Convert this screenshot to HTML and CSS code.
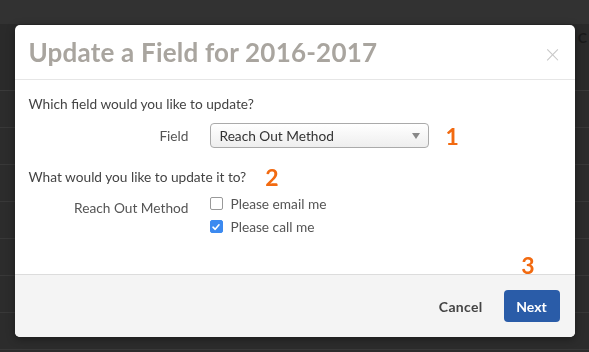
FILE: index.html
```html
<!DOCTYPE html>
<html lang="en">
<head>
  <meta charset="UTF-8">
  <title>Update a Field</title>
  <link rel="stylesheet" href="styles.css">
</head>
<body>
  <div class="page">
    <div class="topbar"></div>
    <div class="table-head"><span class="head-text">C</span></div>
    <div class="row"></div>
    <div class="row"></div>
    <div class="row"></div>
    <div class="row"></div>
    <div class="row"></div>
    <div class="row"></div>
    <div class="row"></div>
  </div>

  <!-- Modal -->
  <div class="modal-overlay">
    <div class="modal">
      <div class="modal-header">
        <h2>Update a Field for 2016-2017</h2>
        <span class="close">&times;</span>
      </div>

      <div class="modal-body">
        <p class="question">Which field would you like to update?</p>
        <div class="field-row">
          <label class="field-label">Field</label>
          <div class="field-control">
            <div class="select">
              <span>Reach Out Method</span>
              <span class="arrow"></span>
            </div>
            <span class="step">1</span>
          </div>
        </div>

        <p class="question">What would you like to update it to? <span class="step">2</span></p>
        <div class="field-row top">
          <label class="field-label">Reach Out Method</label>
          <div class="checks">
            <label class="check"><span class="box"></span>Please email me</label>
            <label class="check"><span class="box checked">
              <svg width="10" height="10" viewBox="0 0 10 10"><path d="M2 5.2 L4.2 7.3 L8 2.8" fill="none" stroke="#fff" stroke-width="1.6" stroke-linecap="round" stroke-linejoin="round"/></svg>
            </span>Please call me</label>
          </div>
        </div>
        <div class="step-row"><span class="step">3</span></div>
      </div>

      <div class="modal-footer">
        <button class="btn-cancel">Cancel</button>
        <button class="btn-next">Next</button>
      </div>
    </div>
  </div>
</body>
</html>
```

FILE: styles.css
```css
body {
  margin: 0;
  font-family: Lato, "Open Sans", sans-serif;
  background-color: #2c2c2c;
  overflow: hidden;
}

/* fondo detras del modal */
.page {
  height: 352px;
}

.topbar {
  height: 24px;
  background-color: #323232;
}

.table-head {
  height: 66px;
  background-color: #2a2a2a;
  border-bottom: 1px solid #3a3a3a;
  display: flex;
  justify-content: flex-end;
}

.head-text {
  color: #1a1a1a;
  font-weight: bold;
  font-size: 14px;
  padding: 5px 2px 0 0;
}

.row {
  height: 36px;
  border-bottom: 1px solid #383838;
}

/* modal */
.modal-overlay {
  position: fixed;
  top: 0; left: 0;
  width: 100%; height: 100%;
  display: flex;
  justify-content: center;
  align-items: flex-start;
  padding-top: 25px;
  box-sizing: border-box;
}

.modal {
  width: 560px;
  background: #fff;
  border-radius: 5px;
  overflow: hidden;
  box-shadow: 0 2px 8px rgba(0,0,0,0.4);
}

.modal-header {
  height: 54px;
  border-bottom: 1px solid #e6e6e6;
  display: flex;
  justify-content: space-between;
  align-items: center;
  padding: 0 14px 0 14px;
}

.modal-header h2 {
  margin: 0;
  font-size: 26px;
  font-weight: bold;
  color: #a9a59f;
  letter-spacing: 0.2px;
}

.close {
  color: #c8c8c8;
  font-size: 27px;
  font-weight: 300;
  margin: 2px 0 0 0;
}

.modal-body {
  padding: 14px 14px 0;
  height: 180px;
  color: #444;
  font-size: 13.7px;
}

.question {
  margin: 0;
  height: 20px;
  line-height: 20px;
  display: flex;
  align-items: center;
}

.question .step {
  margin-left: 19px;
}

.field-row {
  display: grid;
  grid-template-columns: 160px 1fr;
  column-gap: 21px;
  align-items: center;
  margin: 9px 0 19px;
}

.field-row.top {
  align-items: start;
  margin: 5px 0 0;
}

.field-label {
  text-align: right;
  color: #555;
}

.field-row.top .field-label {
  padding-top: 7px;
}

.field-control {
  display: flex;
  align-items: center;
}

.select {
  width: 219px;
  height: 25px;
  box-sizing: border-box;
  border: 1px solid #aaa;
  border-radius: 4px;
  background: linear-gradient(#fff, #eee);
  display: flex;
  justify-content: space-between;
  align-items: center;
  padding: 0 9px;
  color: #333;
}

.arrow {
  width: 0;
  height: 0;
  border-left: 4px solid transparent;
  border-right: 4px solid transparent;
  border-top: 6px solid #888;
  margin-right: -1px;
}

.step {
  color: #f26a10;
  font-size: 23px;
  font-weight: bold;
  line-height: 20px;
}

.field-control .step {
  margin-left: 17px;
}

.checks {
  display: flex;
  flex-direction: column;
}

.check {
  display: flex;
  align-items: center;
  height: 23px;
  color: #555;
}

.box {
  width: 11px;
  height: 11px;
  border: 1px solid #999;
  border-radius: 2px;
  margin-right: 8px;
  display: flex;
  align-items: center;
  justify-content: center;
  background: #fff;
}

.box.checked {
  background: #3c8af0;
  border-color: #3c8af0;
}

.step-row {
  display: flex;
  justify-content: flex-end;
  padding-right: 26px;
  margin-top: 17px;
}

.modal-footer {
  height: 62px;
  background: #f4f4f4;
  border-top: 1px solid #dcdcdc;
  display: flex;
  justify-content: flex-end;
  align-items: center;
  padding: 0 15px;
  gap: 11px;
}

.modal-footer button {
  font-family: inherit;
  font-size: 14px;
  font-weight: bold;
  border: none;
  cursor: pointer;
}

.btn-cancel {
  background: none;
  color: #444;
  padding: 8px 10px;
  letter-spacing: 0.3px;
}

.btn-next {
  background: #2a5ca8;
  color: #fff;
  width: 56px;
  height: 32px;
  border-radius: 4px;
}
```
